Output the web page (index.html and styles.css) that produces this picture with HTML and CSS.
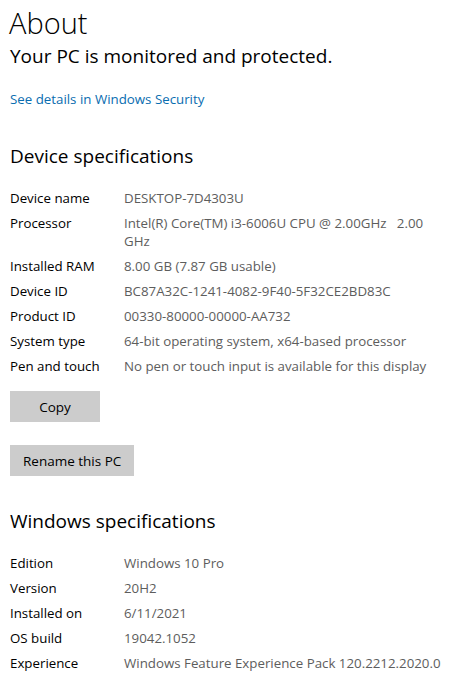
FILE: index.html
```html
<!DOCTYPE html>
<html lang="en">
<head>
<meta charset="utf-8">
<title>About</title>
<link rel="stylesheet" href="styles.css">
</head>
<body>
<main class="page">
  <h1 class="title">About</h1>
  <p class="status">Your PC is monitored and protected.</p>
  <a class="link" href="#">See details in Windows Security</a>

  <h2 class="section">Device specifications</h2>
  <dl class="specs">
    <div class="row"><dt>Device name</dt><dd>DESKTOP-7D4303U</dd></div>
    <div class="row"><dt>Processor</dt><dd>Intel(R) Core(TM) i3-6006U CPU @ 2.00GHz&nbsp;&nbsp; 2.00 GHz</dd></div>
    <div class="row"><dt>Installed RAM</dt><dd>8.00 GB (7.87 GB usable)</dd></div>
    <div class="row"><dt>Device ID</dt><dd>BC87A32C-1241-4082-9F40-5F32CE2BD83C</dd></div>
    <div class="row"><dt>Product ID</dt><dd>00330-80000-00000-AA732</dd></div>
    <div class="row"><dt>System type</dt><dd>64-bit operating system, x64-based processor</dd></div>
    <div class="row"><dt>Pen and touch</dt><dd>No pen or touch input is available for this display</dd></div>
  </dl>
  <div class="buttons">
    <button class="btn btn-copy">Copy</button>
    <button class="btn">Rename this PC</button>
  </div>

  <h2 class="section section-win">Windows specifications</h2>
  <dl class="specs">
    <div class="row"><dt>Edition</dt><dd>Windows 10 Pro</dd></div>
    <div class="row"><dt>Version</dt><dd>20H2</dd></div>
    <div class="row"><dt>Installed on</dt><dd>6/11/2021</dd></div>
    <div class="row"><dt>OS build</dt><dd>19042.1052</dd></div>
    <div class="row"><dt>Experience</dt><dd>Windows Feature Experience Pack 120.2212.2020.0</dd></div>
  </dl>
</main>
</body>
</html>
```
FILE: styles.css
```css
* { box-sizing: border-box; }
html, body { margin: 0; padding: 0; background: #fff; }
body {
  font-family: "Open Sans", "Noto Sans", sans-serif;
  color: #000;
  width: 449px;
  height: 674px;
  overflow: hidden;
}
.page {
  padding: 0 0 0 10px;
  display: flex;
  flex-direction: column;
  align-items: flex-start;
}
.title {
  margin: 5px 0 0 -1px;
  font-size: 29px;
  font-weight: 300;
  line-height: 36px;
}
.status {
  margin: 1px 0 0 0;
  font-size: 19px;
  line-height: 28px;
  font-weight: 400;
}
.link {
  margin-top: 19px;
  font-size: 13.3px;
  line-height: 20px;
  color: #0a6db0;
  text-decoration: none;
}
.section {
  margin: 33px 0 0 0;
  font-size: 19px;
  line-height: 28px;
  font-weight: 400;
}
.specs {
  margin: 19px 0 0 0;
  display: flex;
  flex-direction: column;
  gap: 7px;
  width: 100%;
}
.row {
  display: grid;
  grid-template-columns: 114px 1fr;
  font-size: 13.3px;
  line-height: 18px;
}
dt { margin: 0; color: #000; }
dd { margin: 0; color: #5d5d5d; padding-right: 4px; }
.buttons {
  margin-top: 16px;
  display: flex;
  flex-direction: column;
  align-items: flex-start;
  gap: 23px;
}
.btn {
  font-family: inherit;
  font-size: 13.5px;
  color: #000;
  background: #cccccc;
  border: none;
  height: 31px;
  padding: 0 13px;
}
.btn-copy { width: 90px; }
.section-win { margin-top: 31px; }
```
